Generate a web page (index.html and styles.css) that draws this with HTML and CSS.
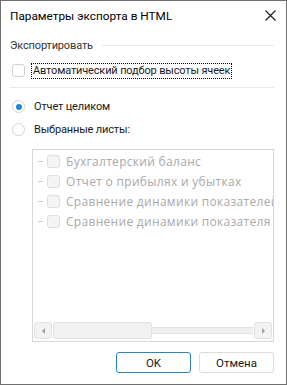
FILE: index.html
```html
<!DOCTYPE html>
<html lang="ru">
<head>
    <meta charset="UTF-8">
    <meta name="viewport" content="width=device-width, initial-scale=1.0">
    <title>Параметры экспорта в HTML</title>
    <link rel="stylesheet" href="styles.css">
</head>
<body>
    <div class="dialog">
        <div class="titlebar">
            <span class="title">Параметры экспорта в HTML</span>
            <button class="close" aria-label="Закрыть">
                <svg width="11" height="11" viewBox="0 0 11 11">
                    <path d="M0.5 0.5 L10.5 10.5 M10.5 0.5 L0.5 10.5" stroke="#1a1a1a" stroke-width="1.1" fill="none"/>
                </svg>
            </button>
        </div>

        <div class="content">
            <div class="group-head">
                <span>Экспортировать</span>
                <div class="line"></div>
            </div>

            <label class="check-row">
                <span class="checkbox"></span>
                <span class="focus">Автоматический подбор высоты ячеек</span>
            </label>

            <div class="separator"></div>

            <div class="radios">
                <label class="radio-row">
                    <span class="radio checked"></span>
                    <span>Отчет целиком</span>
                </label>
                <label class="radio-row">
                    <span class="radio"></span>
                    <span>Выбранные листы:</span>
                </label>
            </div>

            <div class="sheets">
                <ul class="sheet-list">
                    <li><span class="dash"></span><span class="checkbox"></span><span class="name">Бухгалтерский баланс</span></li>
                    <li><span class="dash"></span><span class="checkbox"></span><span class="name">Отчет о прибылях и убытках</span></li>
                    <li><span class="dash"></span><span class="checkbox"></span><span class="name">Сравнение динамики показателей фи</span></li>
                    <li><span class="dash"></span><span class="checkbox"></span><span class="name">Сравнение динамики показателя бала</span></li>
                </ul>
                <div class="hscroll">
                    <span class="arrow left"></span>
                    <div class="track"><div class="thumb"></div></div>
                    <span class="arrow right"></span>
                </div>
            </div>

            <div class="buttons">
                <button class="btn default">OK</button>
                <button class="btn">Отмена</button>
            </div>
        </div>
    </div>
</body>
</html>
```

FILE: styles.css
```css
* {
    box-sizing: border-box;
}
body {
    margin: 0;
    font-family: Roboto, "Noto Sans", Arial, sans-serif;
    font-size: 11px;
    letter-spacing: -0.15px;
    color: #1a1a1a;
    background-color: #fff;
}
.dialog {
    width: 287px;
    height: 385px;
    border: 1px solid #6f6f6f;
    background-color: #fff;
    display: flex;
    flex-direction: column;
}
.titlebar {
    height: 29px;
    display: flex;
    align-items: center;
    justify-content: space-between;
    padding: 0 9px 0 9px;
}
.title {
    font-size: 11.8px;
    letter-spacing: 0;
    color: #000;
}
.close {
    border: none;
    background: none;
    padding: 0;
    width: 11px;
    height: 11px;
    display: flex;
    margin-right: 1px;
}
.content {
    flex: 1;
    padding: 0 12px 0 9px;
    display: flex;
    flex-direction: column;
}
.group-head {
    display: flex;
    align-items: center;
    height: 30px;
    color: #333;
}
.group-head .line {
    flex: 1;
    height: 1px;
    background-color: #e9e9e9;
    margin-left: 9px;
}
.check-row {
    display: flex;
    align-items: center;
    height: 21px;
    padding-left: 2px;
}
.checkbox {
    width: 13px;
    height: 13px;
    border: 1px solid #cfcfcf;
    border-radius: 3px;
    background-color: #fff;
    flex-shrink: 0;
}
.focus {
    margin-left: 6px;
    padding: 0 1px;
    border: 1px dotted #000;
    line-height: 14px;
}
.separator {
    height: 1px;
    background-color: #e9e9e9;
    margin-top: 6px;
}
.radios {
    margin-top: 7px;
}
.radio-row {
    display: flex;
    align-items: center;
    height: 23px;
    padding-left: 2px;
}
.radio {
    width: 13px;
    height: 13px;
    border: 1px solid #d4d4d4;
    border-radius: 50%;
    margin-right: 9px;
    display: flex;
    align-items: center;
    justify-content: center;
}
.radio.checked::after {
    content: "";
    width: 6px;
    height: 6px;
    border-radius: 50%;
    background-color: #1e86d9;
}
.sheets {
    margin: 8px 0 0 22px;
    height: 193px;
    border: 1px solid #d6d6d6;
    display: flex;
    flex-direction: column;
    overflow: hidden;
}
.sheet-list {
    list-style: none;
    margin: 0;
    padding: 1px 0 0 0;
    flex: 1;
    font-family: "Open Sans", "Noto Sans", Arial, sans-serif;
    font-size: 12px;
    letter-spacing: 0.3px;
}
.sheet-list li {
    display: flex;
    align-items: center;
    height: 20px;
    white-space: nowrap;
    color: #a9a9a9;
}
.dash {
    width: 5px;
    height: 1px;
    background-color: #c8c8c8;
    margin: 0 4px 0 5px;
    flex-shrink: 0;
}
.sheet-list .checkbox {
    border-color: #dedede;
    background-color: #f4f4f4;
}
.name {
    margin-left: 6px;
}
.hscroll {
    display: flex;
    align-items: center;
    height: 19px;
    padding: 0 1px 2px 1px;
    gap: 1px;
}
.arrow {
    width: 18px;
    height: 17px;
    border: 1px solid #e2e2e2;
    border-radius: 3px;
    background-color: #f3f3f3;
    display: flex;
    align-items: center;
    justify-content: center;
}
.arrow::after {
    content: "";
    border-top: 3px solid transparent;
    border-bottom: 3px solid transparent;
}
.arrow.left::after {
    border-right: 3px solid #a0a0a0;
}
.arrow.right::after {
    border-left: 3px solid #a0a0a0;
}
.track {
    flex: 1;
    height: 7px;
    background-color: #efefef;
    border-top: 1px solid #e2e2e2;
    border-bottom: 1px solid #e2e2e2;
    display: flex;
    align-items: center;
}
.thumb {
    width: 99px;
    height: 17px;
    border: 1px solid #e2e2e2;
    border-radius: 3px;
    background-color: #f1f1f1;
    flex-shrink: 0;
}
.buttons {
    display: flex;
    justify-content: flex-end;
    gap: 8px;
    margin-top: 10px;
}
.btn {
    width: 75px;
    height: 21px;
    font-family: inherit;
    font-size: 11.5px;
    color: #1a1a1a;
    background-color: #fff;
    border: 1px solid #dcdcdc;
    border-radius: 3px;
    padding: 0;
}
.btn.default {
    border-color: #2a86c8;
}
```
